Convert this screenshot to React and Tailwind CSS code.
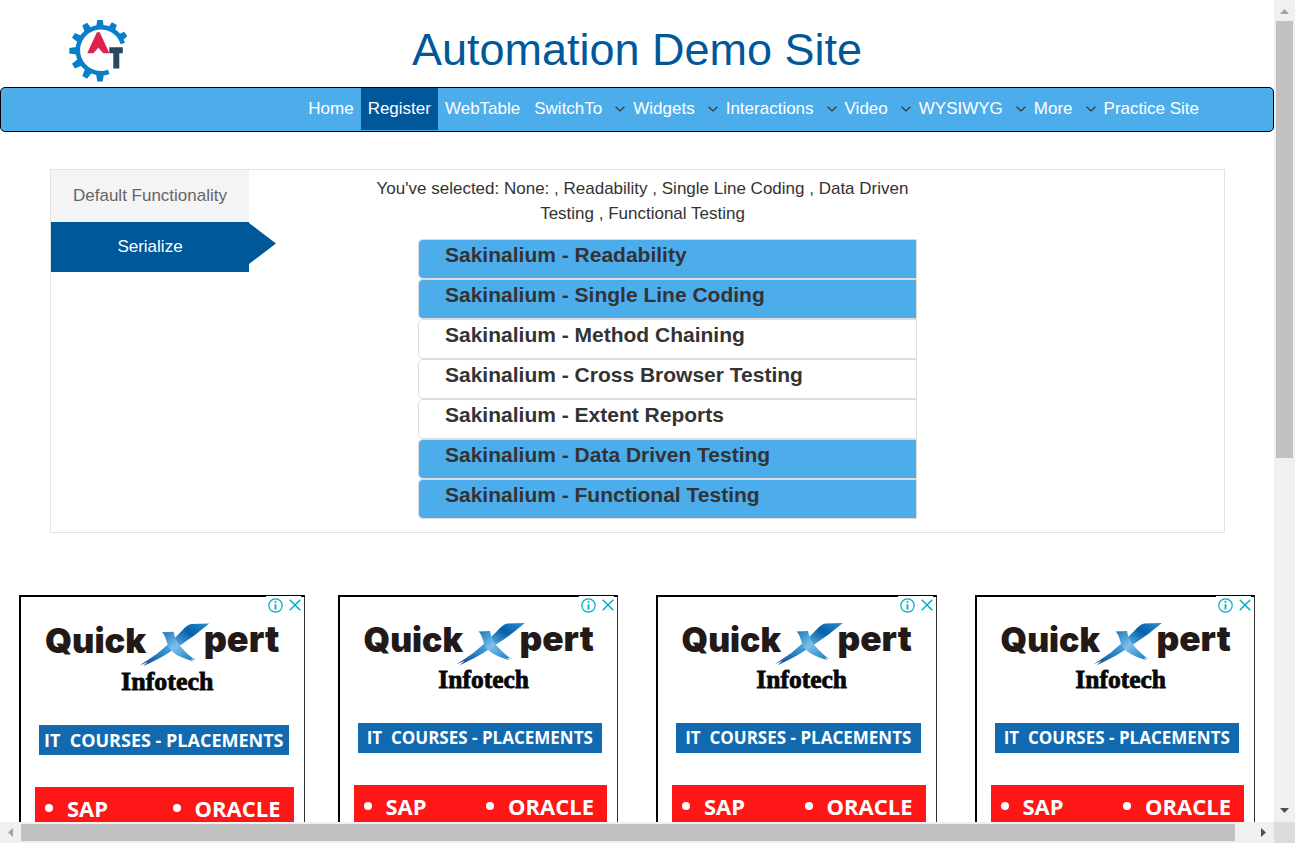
import React, { useState } from "react";

const menu = [
  { label: "Home" },
  { label: "Register", active: true },
  { label: "WebTable" },
  { label: "SwitchTo", sub: true },
  { label: "Widgets", sub: true },
  { label: "Interactions", sub: true },
  { label: "Video", sub: true },
  { label: "WYSIWYG", sub: true },
  { label: "More", sub: true },
  { label: "Practice Site" },
];

const features = [
  "Readability",
  "Single Line Coding",
  "Method Chaining",
  "Cross Browser Testing",
  "Extent Reports",
  "Data Driven Testing",
  "Functional Testing",
];

function Logo() {
  const teeth = [0, 28, 57, 270, 300, 330, 240, 210, 180];
  return (
    <svg viewBox="18 8 62 64" className="h-16 w-[62px]" role="img" aria-label="Automation Demo Site logo">
      <path d="M72.8 33.5 A23 23 0 1 0 58.8 61.8" fill="none" stroke="#0a7fc9" strokeWidth="4.6" />
      {teeth.map((a) => (
        <path key={a} d="M46 18.5 L47.2 10 H52.8 L54 18.5 Z" fill="#0a7fc9" transform={`rotate(${a} 50 40.7)`} />
      ))}
      <path d="M46.9 22.3 H49.700 L59.400 43.300 H53.200 L48.300 37.800 L43.400 43.300 H37.200 Z" fill="#e0224e" />
      <path d="M59.3 40.3 H72.8 M66.3 40 V58.4" fill="none" stroke="#27465f" strokeWidth="6" />
    </svg>
  );
}

function Chevron() {
  return (
    <svg viewBox="0 0 10 6" className="h-[6px] w-[10px]" aria-hidden="true">
      <path d="M0.6 0.7 L5 5 L9.4 0.7" fill="none" stroke="#333" strokeWidth="1.2" />
    </svg>
  );
}

function QuickXpertLogo({ id }) {
  return (
    <svg viewBox="0 0 283 100" className="block w-full">
      <defs>
        <linearGradient id={`${id}-a`} x1="1" y1="0" x2="0" y2="1">
          <stop offset="0" stopColor="#2b8fd0" />
          <stop offset="0.25" stopColor="#0560a8" />
          <stop offset="0.5" stopColor="#5aace0" />
          <stop offset="0.7" stopColor="#2b86c8" />
          <stop offset="1" stopColor="#123f8c" />
        </linearGradient>
        <linearGradient id={`${id}-b`} x1="0" y1="0" x2="1" y2="1">
          <stop offset="0" stopColor="#1674bd" />
          <stop offset="0.45" stopColor="#7cc0ea" />
          <stop offset="1" stopColor="#1275bd" />
        </linearGradient>
      </defs>
      <text x="24" y="56" fontFamily="Inter, sans-serif" fontWeight="900" fontSize="34.500" fill="#231a17">Quick</text>
      <text x="183" y="55" fontFamily="Inter, sans-serif" fontWeight="900" fontSize="36" fill="#231a17">pert</text>
      <path d="M188.500 26.500 L170.500 27 Q166 28 161 34 L150 45 L136 57 L119 68.500 L127 65 L122 69.500 Q138 62 146 57 L160 48 Q174 39 188.500 26.500 Z" fill={`url(#${id}-a)`} />
      <path d="M141 35.200 L153 34.800 C154 42 158 48 163 53 C168 58 171 61 175 63 L170 62 L173 64.500 C160 61 150 56 147 48 C145.500 43 144 37 141 35.200 Z" fill={`url(#${id}-b)`} />
      <text x="146.500" y="93" textAnchor="middle" fontFamily="Liberation Serif, serif" fontWeight="700" fontSize="26" fill="#080808" stroke="#080808" strokeWidth="0.8">Infotech</text>
    </svg>
  );
}

function Ad({ id, large }) {
  return (
    <aside className={large ? "pr-[14px] pl-[19px]" : "px-[19px]"}>
      <div className="relative h-[300px] border-t-2 border-r border-l-2 border-black border-r-[#333] bg-white font-['Open_Sans',sans-serif] font-bold text-white">
        <div className="absolute -top-px right-[3px] flex h-[17px] items-center gap-[6px] bg-white pt-px pl-[2px]">
          <button type="button" aria-label="Ad information">
            <svg viewBox="0 0 15 15" className="block size-[15px]" fill="none" stroke="#00aecd">
              <circle cx="7.5" cy="7.5" r="6.7" strokeWidth="1.2" />
              <path d="M7.5 3 V4.800 M7.5 6.200 V11.500" strokeWidth="1.800" />
            </svg>
          </button>
          <button type="button" aria-label="Close ad">
            <svg viewBox="0 0 12 12" className="block size-3" fill="none" stroke="#00aecd" strokeWidth="1.5">
              <path d="M0.7 0.7 L11.3 11.3 M11.3 0.7 L0.7 11.3" />
            </svg>
          </button>
        </div>
        <QuickXpertLogo id={id} />
        <p className={`mt-7 mr-[15px] ml-[18px] bg-[#1169b0] text-center leading-[30px] whitespace-pre ${large ? "text-lg" : "text-[17px]"}`}>IT  COURSES - PLACEMENTS</p>
        <div className="mt-8 mr-[10px] ml-[14px] flex h-[100px] items-start justify-between bg-[#ff1616] pt-[6px] pr-[13px] pl-[10px] text-[22px] leading-[30px]">
          <div className="flex items-center gap-[14px]">
            <span className="size-2 rounded-full bg-white" />SAP
          </div>
          <div className="flex items-center gap-[14px]">
            <span className="size-2 rounded-full bg-white" />ORACLE
          </div>
        </div>
      </div>
    </aside>
  );
}

function Arrow({ d, color }) {
  return (
    <svg viewBox="0 0 21 21" className="size-[21px] shrink-0" aria-hidden="true">
      <path d={d} fill={color} />
    </svg>
  );
}

export default function App() {
  const [selected, setSelected] = useState([0, 1, 5, 6]);
  const toggle = (i) =>
    setSelected((s) => (s.includes(i) ? s.filter((n) => n !== i) : [...s, i].sort()));

  return (
    <div className="grid h-screen grid-cols-[minmax(0,1fr)_21px] grid-rows-[minmax(0,1fr)_21px] bg-white font-['Liberation_Sans',Arial,sans-serif] text-[17px] text-[#333]">
      <div className="overflow-hidden">
        <header className="grid h-[87px] grid-cols-[1fr_auto_1fr]">
          <a href="#home" className="justify-self-start pt-[18px] pl-[68px]"><Logo /></a>
          <h1 className="pt-[25px] text-[45px] leading-[50px] text-[#00579a]">Automation Demo Site</h1>
        </header>

        <nav className="flex h-[45px] justify-end rounded-[5px] border border-black bg-[#4dadeb] pr-[67px] text-white">
          {menu.map((m) => (
            <a
              key={m.label}
              href={`#${m.label}`}
              className={`flex h-[42px] items-center gap-[13px] pl-[7px] whitespace-nowrap ${m.active ? "bg-[#00579a]" : ""} ${m.sub ? "pr-px" : "pr-[7px]"}`}
            >
              {m.label}
              {m.sub && <Chevron />}
            </a>
          ))}
        </nav>

        <main className="mt-[37px] mr-[49px] ml-[50px] flex h-[364px] items-start border border-[#e2e2e2]">
          <div className="w-[198px] shrink-0 text-center">
            <button type="button" className="block h-[52px] w-full bg-[#f4f4f4] text-[#666]">Default Functionality</button>
            <button type="button" className="relative block h-[50px] w-full bg-[#00579a] text-white">
              Serialize
              <svg viewBox="0 0 27 41" className="absolute top-px left-full h-[41px] w-[27px]" aria-hidden="true">
                <path d="M0 0 L27 20.5 L0 41 Z" fill="#00579a" />
              </svg>
            </button>
          </div>
          <section className="ml-[119px] w-[549px] pt-[6px]">
            <p className="text-center leading-[25px]">
              You've selected: None: {selected.map((i) => `, ${features[i]}`).join(" ")}
            </p>
            <ul className="mt-[13px] ml-[50px]">
              {features.map((f, i) => (
                <li key={f}>
                  <button
                    type="button"
                    aria-pressed={selected.includes(i)}
                    onClick={() => toggle(i)}
                    className={`flex h-10 w-full items-start rounded-l-[5px] border border-[#ddd] pl-[26px] text-[21px] leading-[30px] font-bold ${selected.includes(i) ? "bg-[#4dadeb]" : "bg-white"}`}
                  >
                    Sakinalium - {f}
                  </button>
                </li>
              ))}
            </ul>
          </section>
        </main>

        <div className="mt-[62px] grid grid-cols-4">
          <Ad id="ad1" large />
          <Ad id="ad2" />
          <Ad id="ad3" />
          <Ad id="ad4" />
        </div>
      </div>

      <div className="flex flex-col bg-[#f0f0f0]">
        <Arrow d="M6 14 L10.5 9 L15 14 Z" color="#a3a3a3" />
        <div className="flex-1 px-[2px]">
          <div className="h-[56%] bg-[#c1c1c1]" />
        </div>
        <Arrow d="M6 7 H15 L10.5 12 Z" color="#505050" />
      </div>

      <div className="flex bg-[#f0f0f0]">
        <Arrow d="M13 6 V15 L8 10.5 Z" color="#a3a3a3" />
        <div className="flex-1 py-[2px]">
          <div className="h-full w-[98.5%] bg-[#c1c1c1]" />
        </div>
        <Arrow d="M8 6 V15 L13 10.5 Z" color="#505050" />
      </div>
      <div className="bg-[#dcdcdc]" />
    </div>
  );
}
